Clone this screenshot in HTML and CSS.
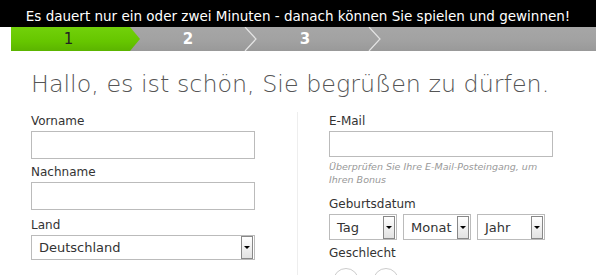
FILE: index.html
```html
<!DOCTYPE html>
<html lang="de">
<head>
    <meta charset="UTF-8">
    <meta name="viewport" content="width=device-width, initial-scale=1.0">
    <title>Registrierung</title>
    <link rel="stylesheet" href="styles.css">
</head>
<body>

<div class="topbar">Es dauert nur ein oder zwei Minuten - danach können Sie spielen und gewinnen!</div>

<div class="steps">
    <div class="step step-active">1</div>
    <div class="step step-2">2
        <svg class="chevron" width="14" height="24" viewBox="0 0 14 24"><polyline points="1,0 12,12 1,24" fill="none" stroke="#e4e4e4" stroke-width="1.2"/></svg>
    </div>
    <div class="step step-3">3
        <svg class="chevron" width="14" height="24" viewBox="0 0 14 24"><polyline points="1,0 12,12 1,24" fill="none" stroke="#e4e4e4" stroke-width="1.2"/></svg>
    </div>
</div>

<h1>Hallo, es ist schön, Sie begrüßen zu dürfen.</h1>

<div class="signup">
    <div class="col col-left">
        <div class="form-group">
            <label>Vorname</label>
            <div class="input"></div>
        </div>
        <div class="form-group">
            <label>Nachname</label>
            <div class="input"></div>
        </div>
        <div class="form-group group-land">
            <label>Land</label>
            <div class="select select-wide">
                <span class="value">Deutschland</span>
                <span class="arrow"></span>
            </div>
        </div>
    </div>

    <div class="col col-right">
        <div class="form-group group-mail">
            <label>E-Mail</label>
            <div class="input input-mail"></div>
            <p class="hint">Überprüfen Sie Ihre E-Mail-Posteingang, um Ihren Bonus</p>
        </div>
        <div class="form-group">
            <label>Geburtsdatum</label>
            <div class="date-row">
                <div class="select"><span class="value">Tag</span><span class="arrow"></span></div>
                <div class="select"><span class="value">Monat</span><span class="arrow"></span></div>
                <div class="select"><span class="value">Jahr</span><span class="arrow"></span></div>
            </div>
        </div>
        <div class="form-group">
            <label>Geschlecht</label>
            <div class="gender">
                <span class="circle"></span>
                <span class="circle"></span>
            </div>
        </div>
    </div>
</div>

</body>
</html>
```

FILE: styles.css
```css
body {
    font-family: "DejaVu Sans", sans-serif;
    margin: 0;
    padding: 0;
    background-color: #fff;
    color: #333;
    overflow: hidden;
}

.topbar {
    height: 24px;
    padding-top: 3px;
    line-height: 27px;
    background-color: #000;
    color: #fff;
    font-size: 13.5px;
    text-align: center;
    white-space: nowrap;
    overflow: hidden;
}

.steps {
    display: flex;
    margin-left: 11px;
    height: 24px;
    background: linear-gradient(#a6a6a6, #a2a2a2 55%, #999 100%);
}

.step {
    position: relative;
    height: 24px;
    line-height: 24px;
    text-align: center;
    font-size: 15px;
    font-weight: bold;
    color: #fff;
    box-sizing: border-box;
}

.step-active {
    width: 129px;
    margin-right: -10px;
    padding-right: 14px;
    color: #222;
    font-weight: normal;
    background: linear-gradient(#72d10a, #66c600 60%, #5bb400 100%);
    clip-path: polygon(0 0, 119px 0, 129px 50%, 119px 100%, 0 100%);
}

.step-2 {
    width: 120px;
    padding-right: 4px;
}

.step-3 {
    width: 124px;
    padding-right: 14px;
}

.chevron {
    position: absolute;
    right: -8px;
    top: 0;
}

h1 {
    margin: 18px 0 0 31px;
    font-size: 23.8px;
    font-weight: 300;
    line-height: 30px;
    color: #555;
    white-space: nowrap;
}

.signup {
    display: flex;
    margin-top: 13px;
    padding-left: 31px;
}

.col-left {
    width: 266px;
}

.col-right {
    border-left: 1px solid #eee;
    padding-left: 31px;
    width: 236px;
}

.form-group {
    margin-bottom: 4px;
}

.group-land {
    margin-top: 6px;
}

.group-mail {
    margin-bottom: 9px;
}

label {
    display: block;
    font-size: 12px;
    line-height: 19px;
    color: #333;
}

.input {
    width: 224px;
    height: 28px;
    box-sizing: border-box;
    border: 1px solid #bbb;
}

.input-mail {
    height: 26px;
}

.hint {
    margin: 3px 0 0;
    font-size: 9.5px;
    font-style: italic;
    line-height: 13px;
    color: #999;
    width: 224px;
}

.select {
    display: flex;
    align-items: center;
    width: 68px;
    height: 26px;
    box-sizing: border-box;
    border: 1px solid #bbb;
    font-size: 13px;
    color: #333;
}

.select-wide {
    width: 224px;
    height: 25px;
}

.select .value {
    flex: 1;
    padding-left: 7px;
}

.arrow {
    position: relative;
    width: 10px;
    height: 21px;
    margin-right: 1px;
    border: 1px solid #888;
    background: linear-gradient(#fff, #e2e2e2);
}

.arrow::after {
    content: "";
    position: absolute;
    left: 2px;
    top: 9px;
    border-left: 3px solid transparent;
    border-right: 3px solid transparent;
    border-top: 3px solid #000;
}

.date-row {
    display: flex;
    gap: 6px;
}

.gender {
    display: flex;
    gap: 14px;
    padding: 5px 0 0 4px;
}

.circle {
    width: 24px;
    height: 24px;
    border: 1px solid #ccc;
    border-radius: 50%;
}
```
